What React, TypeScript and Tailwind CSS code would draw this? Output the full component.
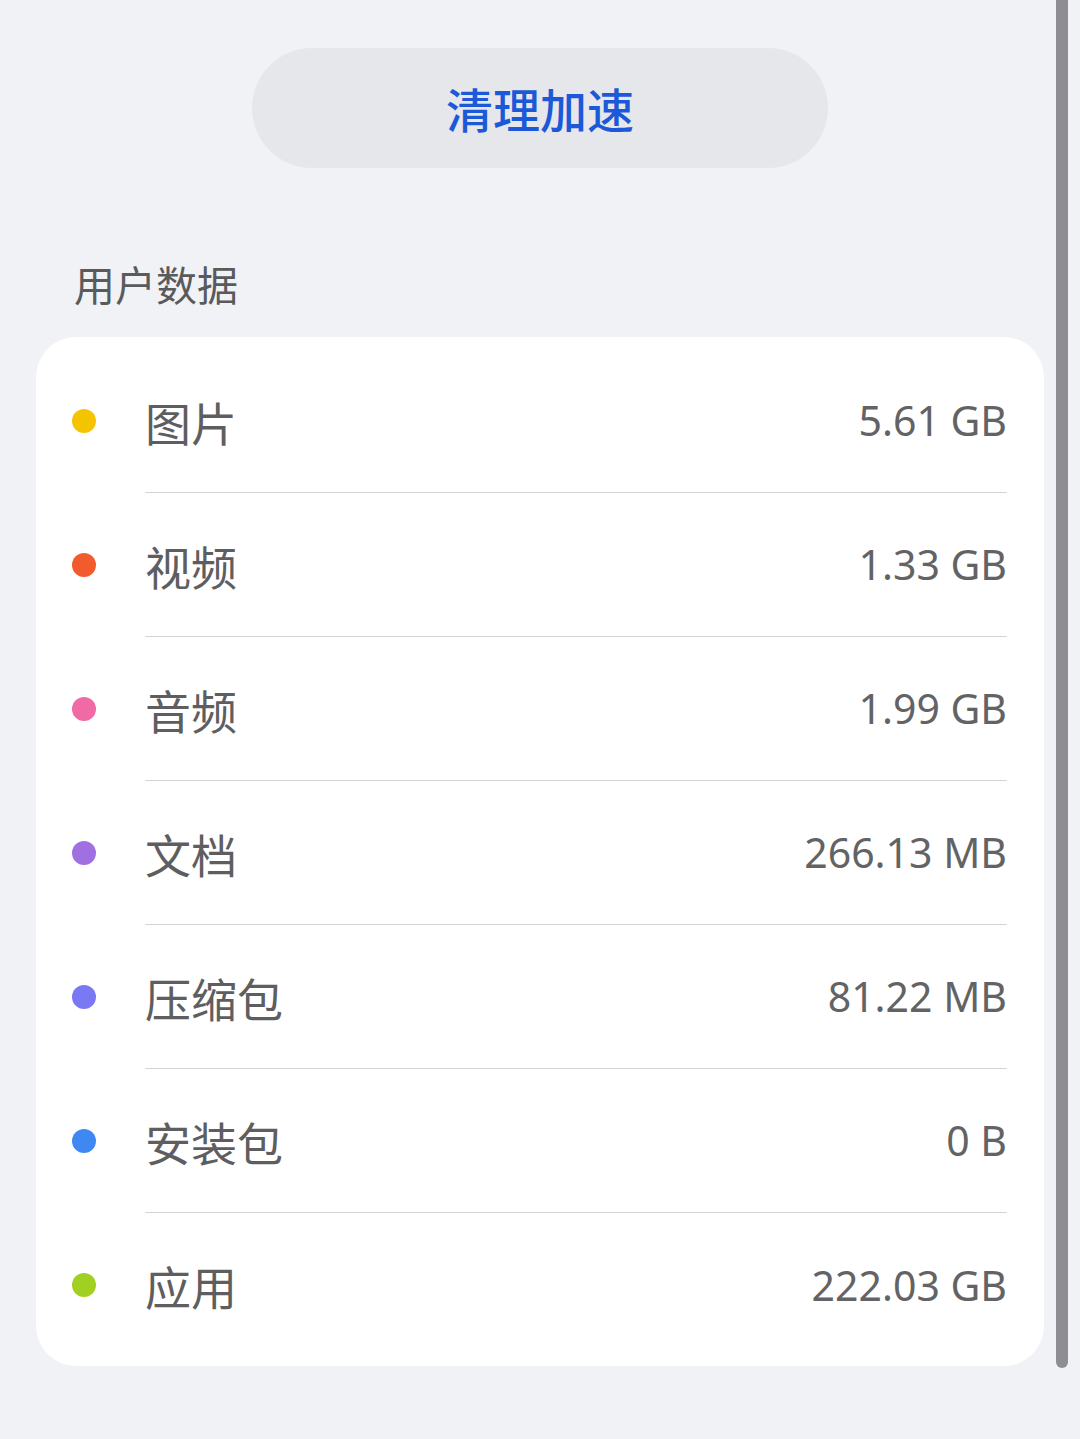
import React from 'react';

type Row = { label: string; value: string; color: string };

const ROWS: Row[] = [
  { label: '图片', value: '5.61 GB', color: '#f5c400' },
  { label: '视频', value: '1.33 GB', color: '#f25b2c' },
  { label: '音频', value: '1.99 GB', color: '#f06aa6' },
  { label: '文档', value: '266.13 MB', color: '#a070e2' },
  { label: '压缩包', value: '81.22 MB', color: '#7a78f2' },
  { label: '安装包', value: '0 B', color: '#3f88f2' },
  { label: '应用', value: '222.03 GB', color: '#a2d022' },
];

const CJK = { fontFamily: '"Noto Sans CJK SC", "Noto Sans", sans-serif' };
const NUM = { fontFamily: '"Noto Sans", "Noto Sans CJK SC", sans-serif' };

export default function App() {
  return (
    <div className="relative min-h-[1439px] w-[1080px] bg-[#f1f2f6] overflow-hidden">
      {/* scrollbar thumb */}
      <div className="absolute right-[12px] top-0 h-[1368px] w-[12px] rounded-b-full bg-[#8e8d93]" />

      <div className="flex flex-col pt-[48px]">
        <div className="flex justify-center">
          <button
            className="flex h-[120px] w-[576px] items-center justify-center rounded-full bg-[#e6e7eb] text-[47px] font-medium text-[#1c59d8]"
            style={CJK}
          >
            清理加速
          </button>
        </div>

        <div className="mt-[95px] pl-[74px] text-[41px] leading-none text-[#5a5a5c]" style={CJK}>
          用户数据
        </div>

        <div className="ml-[36px] mt-[33px] w-[1008px] rounded-[40px] bg-white pt-[12px] pb-[9px]">
          {ROWS.map((row, i) => (
            <div key={row.label} className="flex h-[144px] items-center">
              <div className="flex w-[109px] pl-[36px]">
                <span className="h-[24px] w-[24px] rounded-full" style={{ backgroundColor: row.color }} />
              </div>
              <div
                className={
                  'mr-[37px] flex h-full flex-1 items-center justify-between ' +
                  (i < ROWS.length - 1 ? 'border-b border-[#d4d4d6]' : '')
                }
              >
                <span className="text-[46px] leading-none text-[#5e5e60]" style={CJK}>
                  {row.label}
                </span>
                <span className="text-[41px] leading-none text-[#636365]" style={NUM}>
                  {row.value}
                </span>
              </div>
            </div>
          ))}
        </div>
      </div>
    </div>
  );
}
